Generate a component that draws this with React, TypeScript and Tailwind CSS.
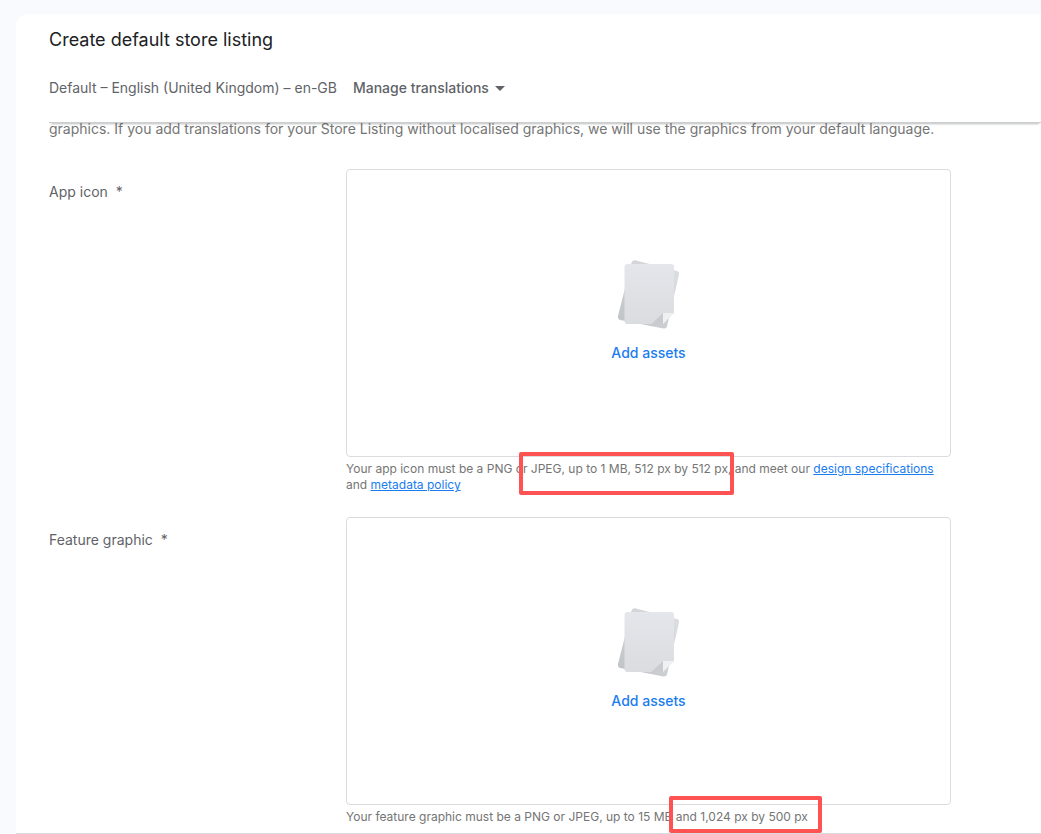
import type { ReactNode } from "react"

function PagesIcon() {
  return (
    <svg width="64" height="70" viewBox="0 0 64 70" aria-hidden="true">
      <defs>
        <linearGradient id="page-front" x1="0" y1="0" x2="0" y2="1">
          <stop offset="0" stopColor="#e5e6eb" />
          <stop offset="1" stopColor="#dadce0" />
        </linearGradient>
        <linearGradient id="page-back" x1="1" y1="0" x2="0" y2="1">
          <stop offset="0" stopColor="#dfe0e3" />
          <stop offset="1" stopColor="#bfc2c5" />
        </linearGradient>
      </defs>
      <path
        d="M18 1.2 60 12q2.6.8 2 3.400L50 67.500Q49.200 70 46.500 69.500L3.200 61Q.5 60 1 57L14.400 4Q15.200.8 18 1.200Z"
        fill="url(#page-back)"
      />
      <path d="M10.500 5H54Q57 5 57 8V54L46 65H10.500Q7.500 65 7.500 62V8Q7.500 5 10.500 5Z" fill="url(#page-front)" />
      <path d="M46 54V65H34.500Z" fill="#c9cbcf" />
      <path d="M46 54H57L46 65Z" fill="#eff0f2" />
    </svg>
  )
}

function Marker({ className }: { className: string }) {
  return <span aria-hidden="true" className={`pointer-events-none absolute rounded-xs border-4 border-[#ff5252] ${className}`} />
}

function AssetField({ id, label, children }: { id: string; label: string; children: ReactNode }) {
  return (
    <div className="flex">
      <label htmlFor={id} className="w-[297px] shrink-0 pt-[13px] text-sm leading-5 text-[#5f6368]">
        {label}
        <span className="ml-2">*</span>
      </label>
      <div className="min-w-0 flex-1">
        <div className="flex h-72 flex-col items-center justify-center rounded border border-[#dadce0] pb-1">
          <PagesIcon />
          <button id={id} type="button" className="mt-3.5 text-sm leading-5 font-medium text-[#1a7cf0]">
            Add assets
          </button>
        </div>
        <p className="relative mt-1 text-xs leading-4 text-[#757575]">{children}</p>
      </div>
    </div>
  )
}

export default function App() {
  return (
    <div className="flex min-h-screen flex-col bg-[#f8fafe] pt-3.5 pl-4 font-['Inter',sans-serif]">
      <main className="flex-1 rounded-tl-xl bg-white">
        <header className="relative z-10 ml-[33px] border-b border-[#cdced0] bg-white pt-3 shadow-[0_3px_2px_-2px_rgba(60,64,67,0.35)]">
          <h1 className="text-lg leading-7 text-[#202124]">Create default store listing</h1>
          <div className="flex items-center gap-4 pt-6 pb-6 text-sm leading-5 text-[#5f6368]">
            <p>Default – English (United Kingdom) – en-GB</p>
            <button type="button" className="flex items-center gap-1.5 font-medium">
              Manage translations
              <svg width="10" height="5" viewBox="0 0 10 5" fill="currentColor" aria-hidden="true">
                <path d="M0 0h10L5 5z" />
              </svg>
            </button>
          </div>
        </header>

        <div className="pr-[90px] pb-2 pl-[33px]">
          <p className="-mt-1 text-sm leading-5 text-[#757575]">
            graphics. If you add translations for your Store Listing without localised graphics, we will use the graphics from your default language.
          </p>
          <div className="mt-[30px] flex flex-col gap-6">
            <AssetField id="app-icon" label="App icon">
              Your app icon must be a PNG or JPEG, up to 1 MB, 512 px by 512 px, and meet our{" "}
              <a href="#design-specifications" className="text-[#1a7cf0] underline">design specifications</a> and{" "}
              <a href="#metadata-policy" className="text-[#1a7cf0] underline">metadata policy</a>
              <Marker className="-top-[9px] left-[173px] h-[43px] w-[215px]" />
            </AssetField>
            <AssetField id="feature-graphic" label="Feature graphic">
              Your feature graphic must be a PNG or JPEG, up to 15 MB and 1,024 px by 500 px
              <Marker className="-top-[13px] left-[323px] h-[37px] w-[153px]" />
            </AssetField>
          </div>
        </div>
      </main>
      <footer className="h-px bg-[#dadce0]" />
    </div>
  )
}
